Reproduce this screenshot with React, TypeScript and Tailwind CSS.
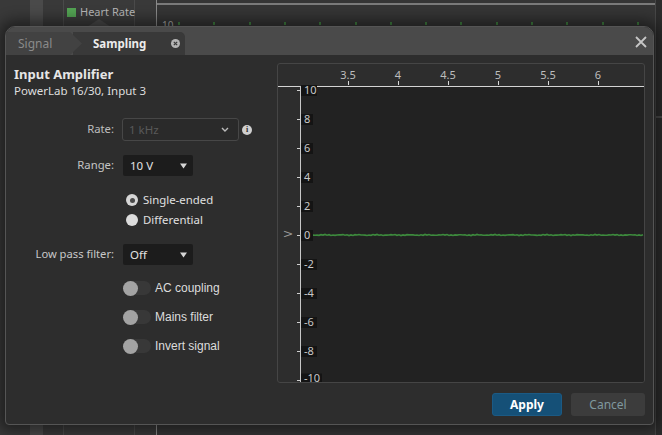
import React from "react";

// chart coordinates are relative to the plot svg (origin at the chart's inner top-left)
const xTicks = [3.5, 4, 4.5, 5, 5.5, 6];
const yTicks = [10, 8, 6, 4, 2, 0, -2, -4, -6, -8, -10];
const xPos = (v: number) => 70 + (v - 3.5) * 100;
const yPos = (v: number) => 26 + (10 - v) * 14.5;

function Chart() {
  const pts: string[] = [];
  for (let x = 23; x <= 366; x += 2) {
    const j = Math.sin(x * 1.7) * 0.35 + Math.sin(x * 0.37) * 0.25;
    pts.push(`${x},${(171 + j).toFixed(2)}`);
  }

  return (
    <div className="w-[368px] h-[320px] border border-[#454545] rounded-[3px] overflow-hidden bg-[#2d2d2d]">
      <svg width="366" height="318" className="block">
        <rect x="23" y="23" width="343" height="295" fill="#222222" />
        <line x1="0" y1="22.5" x2="366" y2="22.5" stroke="#d4d4d4" strokeWidth="1.2" />
        <line x1="22.5" y1="22" x2="22.5" y2="318" stroke="#c8c8c8" strokeWidth="1" />

        {xTicks.map((v) => (
          <g key={v}>
            <text x={xPos(v)} y="15" textAnchor="middle" fontSize="11" fill="#bdbdbd" fontFamily="Noto Sans, sans-serif">
              {v}
            </text>
            <line x1={xPos(v) + 0.5} y1="17" x2={xPos(v) + 0.5} y2="21" stroke="#d8d8d8" strokeWidth="1" />
          </g>
        ))}

        <polyline points={pts.join(" ")} fill="none" stroke="#3d8a3d" strokeWidth="1.6" />

        {yTicks.map((v) => {
          const label = String(v);
          const w = label.length === 1 ? 12 : label.length === 2 ? 16 : 21;
          // bottom label sits against the plot edge, lift it a touch
          const c = yPos(v) - (v === -10 ? 1.5 : 0);
          return (
            <g key={v}>
              <rect x="23" y={c - 5} width={w} height="11" fill="#141414" />
              <text x="26" y={c + 3.5} fontSize="11" fill="#c8c8c8" fontFamily="Noto Sans, sans-serif">
                {label}
              </text>
              <line x1="19" y1={yPos(v) + 0.5} x2="22" y2={yPos(v) + 0.5} stroke="#cfcfcf" strokeWidth="1" />
            </g>
          );
        })}

        <text
          x="9"
          y="170"
          transform="rotate(-90 9 170)"
          textAnchor="middle"
          dominantBaseline="central"
          fontSize="11"
          fill="#9a9a9a"
          fontFamily="Noto Sans, sans-serif"
        >
          V
        </text>
      </svg>
    </div>
  );
}

function Toggle({ label }: { label: string }) {
  return (
    <div className="flex items-center h-[22px]">
      <div className="relative w-[28px] h-[14px] rounded-full bg-[#383838] flex items-center">
        <div className="w-[15px] h-[15px] rounded-full bg-[#a3a3a3]" />
      </div>
      <span className="ml-[4px] text-[12px] text-[#dcdcdc] font-['Liberation_Sans',sans-serif]">{label}</span>
    </div>
  );
}

function Caret() {
  return (
    <svg width="7" height="6" viewBox="0 0 7 6" className="block">
      <path d="M0 0.5h7L3.5 5.5z" fill="#d6d6d6" />
    </svg>
  );
}

function Background() {
  const dots = [];
  for (let x = 180; x < 654; x += 35.3) dots.push(x);
  return (
    <div className="flex h-[435px] w-[662px] bg-[#2f2f2f]">
      <div className="w-[30px] bg-[#393939]" />
      <div className="w-[13px] bg-[#4a4a4a]" />
      <div className="w-[21px] bg-[#393939] border-r border-[#4a4a4a]" />
      <div className="w-[71px] bg-[#3a3a3a] border-r border-[#4a4a4a]">
        <div className="flex items-center h-[26px] pl-[3px] pb-[1px] whitespace-nowrap">
          <div className="w-[9px] h-[9px] bg-[#53a353] shrink-0" />
          <span className="ml-[4px] text-[11px] text-[#b8b8b8] font-['Noto_Sans',sans-serif]">Heart Rate</span>
        </div>
      </div>
      <div className="w-[22px] bg-[#393939] border-r border-[#8a8a8a]" />
      <div className="flex-1 bg-[#353535] relative">
        <div className="h-[3px]" />
        <div className="h-[2px] bg-[#7a7a7a]" />
        <div className="text-[10px] leading-none text-[#aaa] pl-[5px] pt-[15px] font-['Noto_Sans',sans-serif]">10</div>
        {/* trace markers peeking above the dialog */}
        {dots.map((x) => (
          <div key={x} className="absolute top-[22px] w-[2px] h-[3px] bg-[#3f7f3f]" style={{ left: x - 159 }} />
        ))}
        <div className="absolute right-0 top-0 bottom-0 w-[7px] border-l border-[#474747] bg-[#2c2c2c]">
          <div className="mt-[116px] h-[2px] bg-[#4a4a4a]" />
        </div>
      </div>
    </div>
  );
}

export default function App() {
  return (
    <div className="relative w-[662px] h-[435px] overflow-hidden font-['Noto_Sans',sans-serif]">
      <Background />

      {/* callout notch pointing at the channel label */}
      <svg width="24" height="8" className="absolute left-[87px] top-[19px]">
        <path d="M0 8 L12 0 L24 8 Z" fill="#4a4a4a" />
      </svg>

      <div className="absolute left-[5px] top-[26px] w-[649px] h-[399px] rounded-t-[10px] rounded-b-[4px] border border-[#555] bg-[#2d2d2d] overflow-hidden shadow-[0_0_14px_6px_rgba(0,0,0,0.45)] flex flex-col">
        {/* header with tabs */}
        <div className="h-[28px] bg-[#4a4a4a] flex items-end justify-between shrink-0">
          <div className="flex items-end h-[23px]">
            <div className="relative z-10 w-[76px] h-full bg-[#424242] [clip-path:polygon(0_0,64px_0,76px_50%,64px_100%,0_100%)] flex items-center pl-[12px]">
              <span className="text-[12px] text-[#8a8a8a]">Signal</span>
            </div>
            <div className="-ml-[9px] w-[112px] h-full bg-[#393939] rounded-tr-[5px] flex items-center pl-[20px] pr-[5px]">
              <span className="text-[11.5px] font-bold text-[#ececec]">Sampling</span>
              <div className="ml-auto w-[9px] h-[9px] rounded-full bg-[#b5b5b5] flex items-center justify-center">
                <svg width="5" height="5" viewBox="0 0 5 5">
                  <path d="M0.8 0.8L4.2 4.2M4.2 0.8L0.8 4.2" stroke="#3a3a3a" strokeWidth="1.2" />
                </svg>
              </div>
            </div>
          </div>
          <div className="self-center mr-[6px] mt-[1px]">
            <svg width="12" height="12" viewBox="0 0 12 12" className="block">
              <path d="M1 1L11 11M11 1L1 11" stroke="#c6c6c6" strokeWidth="1.8" />
            </svg>
          </div>
        </div>

        {/* body */}
        <div className="flex-1 flex flex-col pt-[8px] pb-[8px]">
          <div className="flex">
            <div className="w-[271px] shrink-0 -mt-[8px] pt-[10px]">
              <div className="pl-[8px]">
                <div className="text-[13px] leading-[18px] font-bold text-[#e6e6e6]">Input Amplifier</div>
                <div className="text-[11.5px] leading-[16px] text-[#dedede]">PowerLab 16/30, Input 3</div>
              </div>

              <div className="flex items-center mt-[19px] h-[23px]">
                <div className="w-[108px] text-right text-[11.3px] text-[#bdbdbd]">Rate:</div>
                <div className="ml-[8px] w-[117px] h-[23px] rounded-[3px] border border-[#474747] bg-[#2a2a2a] flex items-center pl-[6px] pr-[9px]">
                  <span className="text-[11.5px] text-[#595959]">1 kHz</span>
                  <svg width="8" height="5" viewBox="0 0 8 5" className="ml-auto">
                    <path d="M1 1L4 4L7 1" stroke="#bbbbbb" strokeWidth="1.4" fill="none" />
                  </svg>
                </div>
                <div className="ml-[3px] w-[10px] h-[10px] rounded-full bg-[#cfcfcf] flex items-center justify-center text-[8px] leading-none font-bold text-[#2d2d2d] font-['Liberation_Serif',serif]">
                  i
                </div>
              </div>

              <div className="flex items-center mt-[14px] h-[21px]">
                <div className="w-[108px] text-right text-[11.3px] text-[#c4c4c4]">Range:</div>
                <div className="ml-[9px] w-[70px] h-[21px] rounded-[2px] bg-[#1c1c1c] flex items-center pl-[7px] pr-[6px]">
                  <span className="text-[11.5px] text-[#e2e2e2]">10 V</span>
                  <div className="ml-auto">
                    <Caret />
                  </div>
                </div>
              </div>

              <div className="mt-[14px] ml-[120px] flex flex-col">
                <div className="flex items-center h-[20px]">
                  <div className="w-[12px] h-[12px] rounded-full bg-[#d6d6d6] flex items-center justify-center">
                    <div className="w-[5px] h-[5px] rounded-full bg-[#4a4a4a]" />
                  </div>
                  <span className="ml-[5px] text-[11.4px] text-[#e0e0e0]">Single-ended</span>
                </div>
                <div className="flex items-center h-[20px]">
                  <div className="w-[12px] h-[12px] rounded-full bg-[#dcdcdc]" />
                  <span className="ml-[5px] text-[11.4px] text-[#e0e0e0]">Differential</span>
                </div>
              </div>

              <div className="flex items-center mt-[14px] h-[21px]">
                <div className="w-[108px] text-right text-[11.2px] text-[#c8c8c8]">Low pass filter:</div>
                <div className="ml-[9px] w-[70px] h-[21px] rounded-[2px] bg-[#1c1c1c] flex items-center pl-[7px] pr-[6px]">
                  <span className="text-[11.5px] text-[#e2e2e2]">Off</span>
                  <div className="ml-auto">
                    <Caret />
                  </div>
                </div>
              </div>

              <div className="mt-[12px] ml-[117px] flex flex-col gap-[7px]">
                <Toggle label="AC coupling" />
                <Toggle label="Mains filter" />
                <Toggle label="Invert signal" />
              </div>
            </div>

            <Chart />
          </div>

          <div className="mt-[10px] flex justify-end gap-[9px] pr-[8px]">
            <button className="w-[70px] h-[23px] rounded-[3px] bg-[#155077] border border-[#1b5a84] text-[12px] font-bold text-white">
              Apply
            </button>
            <button className="w-[74px] h-[23px] rounded-[3px] bg-[#3c3c3c] text-[12px] text-[#7f989e]">Cancel</button>
          </div>
        </div>
      </div>
    </div>
  );
}
